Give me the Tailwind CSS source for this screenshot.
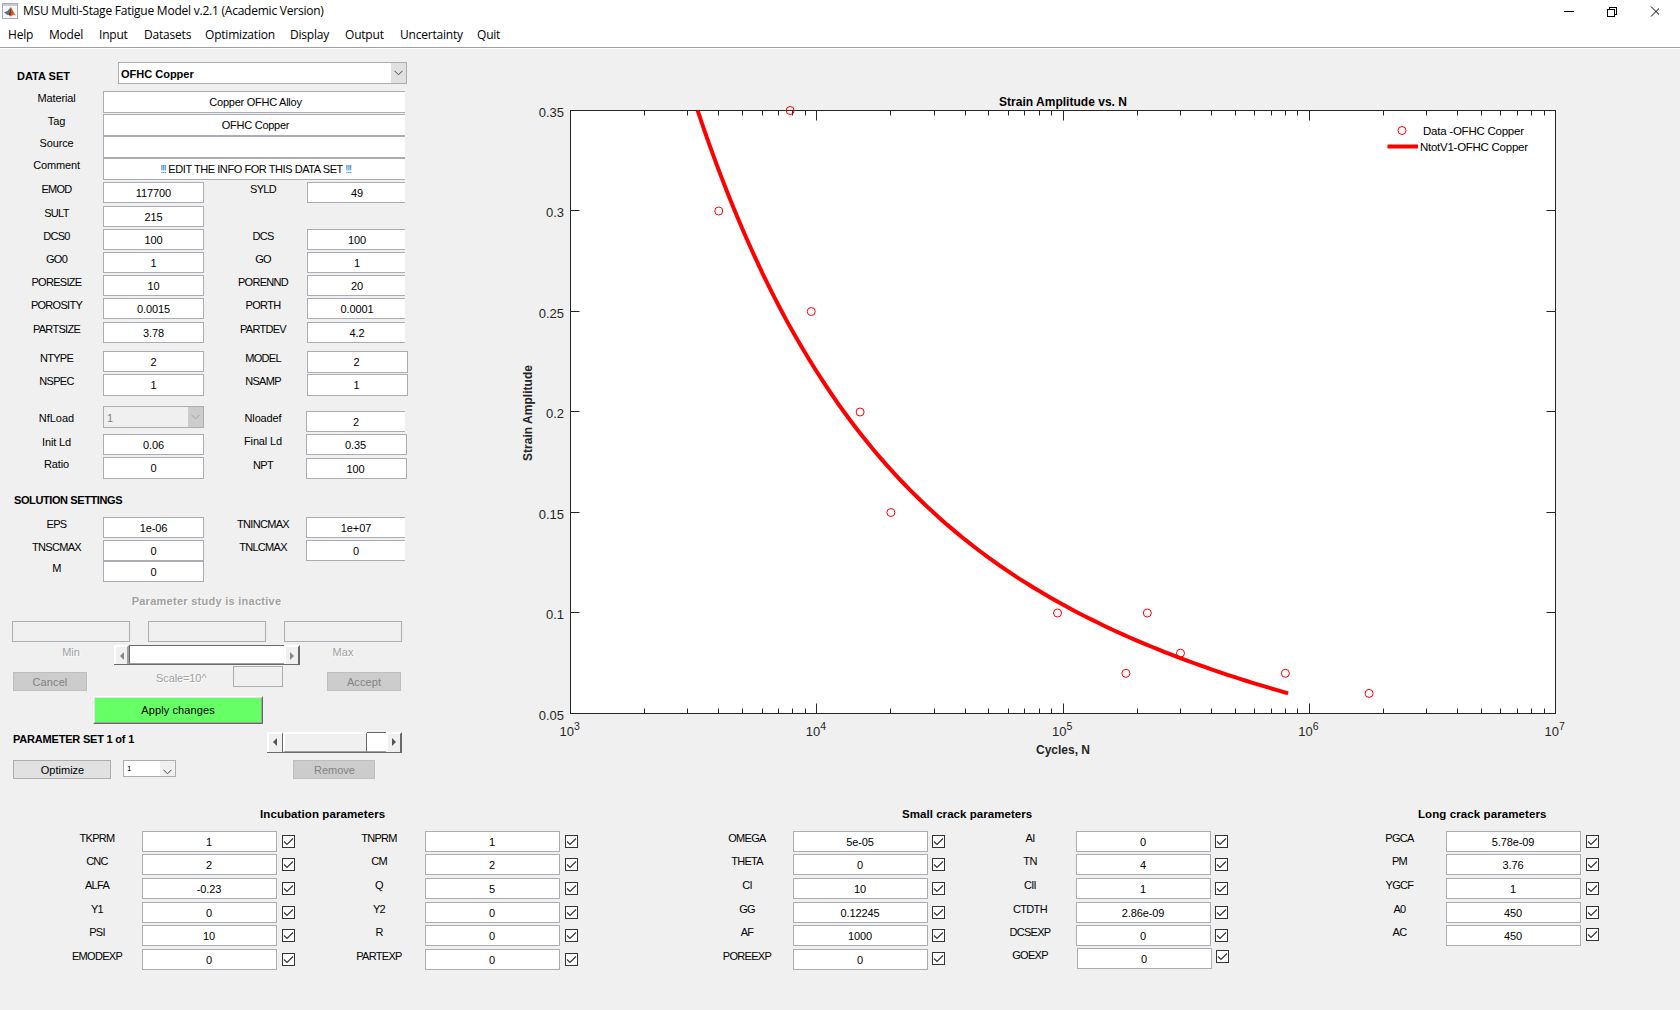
<!DOCTYPE html>
<html lang="en">
<head>
    <meta charset="UTF-8">
    <meta name="viewport" content="width=device-width, initial-scale=1.0">
    <title>MSU Multi-Stage Fatigue Model v.2.1 (Academic Version)</title>
    <script src="https://cdn.jsdelivr.net/npm/@tailwindcss/browser@4"></script>
</head>
<body class="w-[1680px] h-[1010px] overflow-hidden bg-[#f0f0f0] text-black text-[11px] font-['Liberation_Sans',Arial,sans-serif]">

    <!-- Title bar and menu -->
    <header class="h-[49px] bg-white border-b border-white font-['Open_Sans','Noto_Sans',sans-serif] text-[12px]">
        <div class="h-[48px] border-b border-[#a0a0a0]">
            <div class="flex h-[22px] items-center pl-[2px]">
                <svg width="16" height="16" viewBox="0 0 16 16" class="shrink-0">
                    <rect x="0.5" y="0.5" width="15" height="15" fill="#f4f6f8" stroke="#a3adb8"/>
                    <rect x="1" y="1" width="14" height="2" fill="#c3ccd6"/>
                    <path d="M2 9.5 L5.5 8 L8.5 4.5 L7.5 11 L5.5 12 Z" fill="#3f74a8"/>
                    <path d="M8.8 4 C10 5 11.5 10 14 12.5 L11.5 11.5 L8.5 13.5 L6.2 11.3 C7.8 10 8 6 8.8 4 Z" fill="#d8581c"/>
                    <path d="M8.8 4 C8.6 7 8 10.5 6.2 11.3 L8 12.5 C9.2 9 9.3 6.5 8.8 4 Z" fill="#7e1f10"/>
                </svg>
                <span class="ml-[5px] w-[1536px] whitespace-nowrap tracking-[-0.23px]">MSU Multi-Stage Fatigue Model v.2.1 (Academic Version)</span>
                <svg width="100" height="12" viewBox="0 0 100 12" fill="none" stroke="#000" class="shrink-0">
                    <path d="M5 6.5h10"/>
                    <path d="M48.500 4.500h7v7h-7z M50.500 4.500v-2h7v7h-2" shape-rendering="crispEdges"/>
                    <path d="M92 1.500l10 10M102 1.500l-10 10"/>
                </svg>
            </div>
            <nav class="grid h-[25px] grid-cols-[41px_50px_45px_61px_85px_55px_55px_77px_40px] items-center pl-[8px] whitespace-nowrap tracking-[-0.2px]">
                <span>Help</span><span>Model</span><span>Input</span><span>Datasets</span><span>Optimization</span><span>Display</span><span>Output</span><span>Uncertainty</span><span>Quit</span>
            </nav>
        </div>
    </header>

    <main class="flex h-[751px]">
        <!-- Left panel -->
        <aside class="w-[420px] shrink-0">
            <div class="flex h-[42px] pt-[13px]">
                <h2 class="w-[101px] ml-[17px] mt-[7px] leading-[14px] font-bold">DATA SET</h2>
                <div class="flex h-[22px] w-[289px] justify-between border border-[#abadb3] bg-white">
                    <span class="pl-[2px] leading-[22px] font-bold">OFHC Copper</span>
                    <span class="flex w-[15px] items-center justify-center bg-[#e1e1e1]">
                        <svg width="9" height="6" viewBox="0 0 9 6" fill="none" stroke="#444"><path d="M0.500 0.800l4 4l4-4"/></svg>
                    </span>
                </div>
            </div>
            <div id="info"></div>
            <div class="flex h-[308px]">
                <div id="material-left" class="w-[204px]"></div>
                <div id="material-right" class="w-[204px]"></div>
            </div>
            <h2 class="ml-[14px] mt-[3px] h-[24px] leading-[14px] font-bold tracking-[-0.4px]">SOLUTION SETTINGS</h2>
            <div class="flex h-[65px]">
                <div id="solution-left" class="w-[204px]"></div>
                <div id="solution-right" class="w-[204px]"></div>
            </div>

            <!-- Parameter study -->
            <p class="mt-[12px] w-[413px] text-center leading-[14px] font-bold tracking-[0.27px] text-[#a0a0a0] [text-shadow:1px_1px_0_#fff]">Parameter study is inactive</p>
            <div class="mt-[13px] ml-[12px] flex gap-[18px]">
                <div class="h-[21px] w-[118px] border border-[#abadb3]"></div>
                <div class="h-[21px] w-[118px] border border-[#abadb3]"></div>
                <div class="h-[21px] w-[118px] border border-[#abadb3]"></div>
            </div>
            <div class="flex h-[24px] text-[#a0a0a0] [text-shadow:1px_1px_0_#fff]">
                <span class="w-[114px] pl-[28px] text-center leading-[20px]">Min</span>
                <div class="mt-[3px] flex h-[20px] w-[186px] border-b border-[#696969]">
                    <span class="flex w-[15px] items-center justify-center border-t-2 border-l-2 border-r-2 border-t-white border-l-white border-r-[#a0a0a0]">
                        <svg width="4" height="8" viewBox="0 0 4 8"><path d="M4 0v8l-4-4z" fill="#888"/></svg>
                    </span>
                    <span class="w-[155px] border border-r-0 border-[#696969] border-b-[#a0a0a0] bg-white"></span>
                    <span class="flex w-[16px] items-center justify-center border-t-2 border-l-2 border-r-2 border-t-white border-l-white border-r-[#696969]">
                        <svg width="4" height="8" viewBox="0 0 4 8"><path d="M0 0v8l4-4z" fill="#888"/></svg>
                    </span>
                </div>
                <span class="w-[86px] text-center leading-[20px]">Max</span>
            </div>
            <div class="flex h-[25px]">
                <button class="ml-[13px] mt-[6px] h-[19px] w-[74px] border border-[#bfbfbf] bg-[#ccc] tracking-[0.1px] text-[#838383]"><span class="relative top-[1px]">Cancel</span></button>
                <span class="ml-[69px] w-[77px] leading-[24px] tracking-[-0.1px] text-[#a0a0a0] [text-shadow:1px_1px_0_#fff]">Scale=10^</span>
                <div class="h-[21px] w-[50px] border border-[#abadb3]"></div>
                <button class="ml-[44px] mt-[6px] h-[19px] w-[74px] border border-[#bfbfbf] bg-[#ccc] tracking-[0.1px] text-[#838383]"><span class="relative top-[1px]">Accept</span></button>
            </div>
            <div class="mt-[5px] ml-[93px] h-[28px] w-[170px] border-t border-l border-r border-b border-t-white border-l-white border-r-[#696969] border-b-[#696969]">
                <button class="block h-full w-full border border-t-[#e3e3e3] border-l-[#e3e3e3] border-r-[#a0a0a0] border-b-[#a0a0a0] bg-[#66ff66] tracking-[0.1px]">Apply changes</button>
            </div>
            <div class="mt-[8px] flex h-[21px]">
                <h2 class="ml-[13px] w-[254px] leading-[14px] font-bold tracking-[-0.2px]">PARAMETER SET 1 of 1</h2>
                <div class="flex h-[21px] w-[135px] border-b border-[#696969]">
                    <span class="flex w-[16px] items-center justify-center border-t-2 border-l-2 border-r border-t-white border-l-white border-r-[#696969] pr-px pb-[2px]">
                        <svg width="4" height="8" viewBox="0 0 4 8"><path d="M4 0v8l-4-4z" fill="#555"/></svg>
                    </span>
                    <span class="w-[84px] border-t-2 border-l-2 border-r border-b border-t-white border-l-white border-r-[#696969] border-b-[#a0a0a0]"></span>
                    <span class="w-[19px] border-t border-b border-t-[#696969] border-b-[#a0a0a0] bg-white"></span>
                    <span class="flex w-[16px] items-center justify-center border-t-2 border-l-2 border-r-2 border-t-white border-l-white border-r-[#696969] pb-[2px]">
                        <svg width="4" height="8" viewBox="0 0 4 8"><path d="M0 0v8l4-4z" fill="#555"/></svg>
                    </span>
                </div>
            </div>
            <div class="mt-[7px] ml-[13px] flex h-[19px]">
                <button class="h-[19px] w-[98px] border border-[#adadad] bg-[#e1e1e1] pl-px"><span class="relative top-[1px]">Optimize</span></button>
                <div class="ml-[12px] flex h-[17px] w-[53px] border border-[#abadb3] bg-white">
                    <span class="w-[36px] pl-[3px] text-[8px] leading-[15px]">1</span>
                    <span class="flex w-[15px] items-end justify-center bg-[#f0f0f0] pb-[1px]">
                        <svg width="9" height="6" viewBox="0 0 9 6" fill="none" stroke="#444"><path d="M0.500 0.800l4 4l4-4"/></svg>
                    </span>
                </div>
                <button class="ml-[117px] h-[19px] w-[82px] border border-[#bfbfbf] bg-[#ccc] pl-px text-[#838383]"><span class="relative top-[1px]">Remove</span></button>
            </div>
        </aside>

        <!-- Strain-life plot, drawn in window coordinates -->
        <svg id="plot" width="1260" height="751" viewBox="420 49 1260 751" class="shrink-0 font-['Liberation_Sans',Arial,sans-serif]"></svg>
    </main>

    <!-- Model parameters -->
    <footer class="flex">
        <section class="ml-[52px] w-[526px]">
            <h2 class="h-[31px] pl-[208px] leading-[28px] text-[11.5px] font-bold tracking-[0.09px]">Incubation parameters</h2>
            <div class="flex gap-[40px]">
                <div id="inc-1" class="w-[243px]"></div>
                <div id="inc-2" class="w-[243px]"></div>
            </div>
        </section>
        <section class="ml-[125px] w-[526px]">
            <h2 class="h-[31px] pl-[199px] leading-[28px] text-[11.5px] font-bold tracking-[0.05px]">Small crack parameters</h2>
            <div class="flex gap-[41px]">
                <div id="small-1" class="w-[242px]"></div>
                <div id="small-2" class="w-[242px]"></div>
            </div>
        </section>
        <section class="ml-[127px] w-[243px]">
            <h2 class="h-[31px] pl-[62px] leading-[28px] text-[11.5px] font-bold tracking-[0.09px]">Long crack parameters</h2>
            <div id="long-1"></div>
        </section>
    </footer>

    <script>
        const H21 = "h-[21px] leading-[20px]";
        const H22 = "h-[22px] leading-[20px]";
        const CLIP = "w-[98px] border-r-0 pl-px ml-[103px]";
        const CLIP_L = "w-[99px] border-r-0 ml-[102px]";
        const FULL = "w-[101px] ml-[103px]";
        const FULL_R = "w-[101px] ml-[103px] pr-[2px]";
        const FULL_L = "w-[101px] ml-[102px] pr-[2px]";

        function fill(id, html) {
            document.getElementById(id).innerHTML = html;
        }

        // capitals are set tighter than mixed case
        function tracking(text) {
            return /[a-z]/.test(text) ? "tracking-[-0.15px]" : "tracking-[-0.7px]";
        }

        // rows: [label, value, margin, field classes, label offset]
        function fields(rows, labelPad) {
            return rows.map(([label, value, margin, box, offset]) => `
                <div class="relative ${margin}">
                    <span class="absolute top-0 left-0 w-[103px] text-center leading-[14px] ${labelPad} ${tracking(label)} ${offset || ""}">${label}</span>
                    <div class="border border-[#abadb3] bg-white text-center tracking-[-0.1px] ${box}">${value}</div>
                </div>`).join("");
        }

        fill("info", [
            ["Material", "Copper OFHC Alloy", ""],
            ["Tag", "OFHC Copper", "mt-[1px]"],
            ["Source", "", ""],
            ["Comment", "<span class='text-[#1e7fd0] tracking-[-1.2px]'>!!!</span> EDIT THE INFO FOR THIS DATA SET <span class='text-[#1e7fd0] tracking-[-1.2px]'>!!!</span>", ""],
        ].map(([label, value, margin]) => `
            <div class="flex ${margin}">
                <span class="w-[103px] pl-[10px] text-center leading-[15px] tracking-[-0.15px]">${label}</span>
                <div class="h-[22px] w-[302px] border border-r-0 border-[#abadb3] bg-white pl-[2px] text-center leading-[20px] whitespace-pre ${label === "Comment" ? "tracking-[-0.43px]" : "tracking-[-0.25px]"}">${value}</div>
            </div>`).join("") + `<div class="h-[2px]"></div>`);

        fill("material-left", fields([
            ["EMOD", "117700", "", `${H21} ${FULL}`],
            ["SULT", "215", "mt-[3px]", `${H21} ${FULL}`],
            ["DCS0", "100", "mt-[2px]", `${H21} ${FULL}`],
            ["GO0", "1", "mt-[2px]", `${H21} ${FULL}`],
            ["PORESIZE", "10", "mt-[2px]", `${H21} ${FULL}`],
            ["POROSITY", "0.0015", "mt-[2px]", `${H21} ${FULL}`],
            ["PARTSIZE", "3.78", "mt-[3px]", `${H21} ${FULL}`],
            ["NTYPE", "2", "mt-[8px]", `${H21} ${FULL}`],
            ["NSPEC", "1", "mt-[2px]", `${H22} ${FULL}`],
        ], "pl-[10px]") + `
            <div class="mt-[10px] flex h-[22px]">
                <span class="w-[103px] pl-[10px] text-center leading-[24px]">NfLoad</span>
                <div class="flex h-[22px] w-[101px] border border-[#abadb3] text-[#838383]">
                    <span class="w-[84px] pl-[3px] leading-[22px]">1</span>
                    <span class="flex w-[15px] items-center justify-center bg-[#ccc]">
                        <svg width="9" height="6" viewBox="0 0 9 6" fill="none" stroke="#a0a0a0"><path d="M0.500 0.800l4 4l4-4"/></svg>
                    </span>
                </div>
            </div>` + fields([
            ["Init Ld", "0.06", "mt-[6px]", `${H21} ${FULL}`, "top-[1px]"],
            ["Ratio", "0", "mt-[2px]", `${H22} ${FULL}`],
        ], "pl-[10px]"));

        fill("material-right", fields([
            ["SYLD", "49", "", `${H21} ${CLIP}`],
            ["DCS", "100", "mt-[26px]", `${H21} ${CLIP}`],
            ["GO", "1", "mt-[2px]", `${H21} ${CLIP}`],
            ["PORENND", "20", "mt-[2px]", `${H21} ${CLIP}`],
            ["PORTH", "0.0001", "mt-[2px]", `${H21} ${CLIP}`],
            ["PARTDEV", "4.2", "mt-[3px]", `${H21} ${CLIP}`],
            ["MODEL", "2", "mt-[8px]", `${H22} ${FULL_R}`],
            ["NSAMP", "1", "mt-[1px]", `${H22} ${FULL_R}`],
            ["Nloadef", "2", "mt-[15px]", `${H21} ${CLIP_L}`],
            ["Final Ld", "0.35", "mt-[2px]", `${H21} ${FULL_L}`],
            ["NPT", "100", "mt-[3px]", `${H21} ${FULL_L}`],
        ], "pl-[15px]"));

        fill("solution-left", fields([
            ["EPS", "1e-06", "", `${H21} ${FULL}`],
            ["TNSCMAX", "0", "mt-[2px]", `${H21} ${FULL}`],
            ["M", "0", "", `${H21} ${FULL}`],
        ], "pl-[10px]"));

        fill("solution-right", fields([
            ["TNINCMAX", "1e+07", "", `${H21} ${CLIP_L}`],
            ["TNLCMAX", "0", "mt-[2px]", `${H21} ${CLIP_L}`],
        ], "pl-[15px]"));

        // rows: [label, value, margin, row shift, checkbox shift]
        function params(rows, gap, labelPad) {
            return rows.map(([label, value, margin, shift, checkShift]) => `
                <div class="flex h-[21px] ${margin}">
                    <span class="w-[90px] shrink-0 text-center leading-[14px] ${labelPad} ${tracking(label)}">${label}</span>
                    <div class="h-[21px] w-[135px] shrink-0 border border-[#abadb3] bg-white pr-px text-center leading-[21px] tracking-[-0.1px] ${shift || ""}">${value}</div>
                    <svg width="13" height="13" viewBox="0 0 13 13" class="shrink-0 mt-[4px] ${gap} ${checkShift || ""}">
                        <rect x="0.5" y="0.5" width="12" height="12" fill="#fff" stroke="#333"/>
                        <path d="M2 6.500l3 3l6-6" fill="none" stroke="#333" stroke-width="1.2"/>
                    </svg>
                </div>`).join("");
        }

        fill("inc-1", params([
            ["TKPRM", "1", ""],
            ["CNC", "2", "mt-[2px]"],
            ["ALFA", "-0.23", "mt-[3px]"],
            ["Y1", "0", "mt-[3px]"],
            ["PSI", "10", "mt-[2px]"],
            ["EMODEXP", "0", "mt-[3px]"],
        ], "ml-[5px]", "pr-0"));
        fill("inc-2", params([
            ["TNPRM", "1", ""],
            ["CM", "2", "mt-[2px]"],
            ["Q", "5", "mt-[3px]"],
            ["Y2", "0", "mt-[3px]"],
            ["R", "0", "mt-[2px]"],
            ["PARTEXP", "0", "mt-[3px]"],
        ], "ml-[5px]", "pr-[2px]"));
        fill("small-1", params([
            ["OMEGA", "5e-05", ""],
            ["THETA", "0", "mt-[2px]"],
            ["CI", "10", "mt-[3px]"],
            ["GG", "0.12245", "mt-[3px]"],
            ["AF", "1000", "mt-[2px]"],
            ["POREEXP", "0", "mt-[3px]", "", "relative -top-px"],
        ], "ml-[4px]", "pr-[2px]"));
        fill("small-2", params([
            ["AI", "0", ""],
            ["TN", "4", "mt-[2px]"],
            ["CII", "1", "mt-[3px]"],
            ["CTDTH", "2.86e-09", "mt-[3px]"],
            ["DCSEXP", "0", "mt-[2px]"],
            ["GOEXP", "0", "mt-[2px]", "ml-px", "relative -top-[2px]"],
        ], "ml-[4px]", "pr-[2px]"));
        fill("long-1", params([
            ["PGCA", "5.78e-09", ""],
            ["PM", "3.76", "mt-[2px]"],
            ["YGCF", "1", "mt-[3px]"],
            ["A0", "450", "mt-[3px]"],
            ["AC", "450", "mt-[2px]", "", "relative -top-px"],
        ], "ml-[5px]", "pr-[3px]"));

        // Plot scales: log10 cycles on x, strain amplitude on y
        const L = 570.5, R = 1555.5, T = 110.5, B = 713.5;
        const px = logN => L + (logN - 3) * (R - L) / 4;
        const py = strain => B - (strain - 0.05) * (B - T) / 0.3;
        const snap = v => Math.floor(v) + 0.5;

        let svg = `<rect x="${L}" y="${T}" width="${R - L}" height="${B - T}" fill="#fff" stroke="#262626"/>`;

        let ticks = "";
        for (let d = 3; d < 7; d++) {
            for (let k = 1; k < 10; k++) {
                if (d === 3 && k === 1) continue;
                const x = snap(px(d + Math.log10(k)));
                const len = k === 1 ? 10 : 5;
                ticks += `M${x} ${T}v${len}M${x} ${B}v${-len}`;
            }
        }
        for (let i = 1; i < 6; i++) {
            const y = snap(py(0.05 + i * 0.05) - 0.1);
            ticks += `M${L} ${y}h9M${R} ${y}h-9`;
        }
        svg += `<path d="${ticks}" stroke="#262626" fill="none"/>`;

        [0.05, 0.1, 0.15, 0.2, 0.25, 0.3, 0.35].forEach(v => {
            svg += `<text x="564" y="${py(v) + 6}" text-anchor="end" font-size="13" fill="#262626">${v}</text>`;
        });
        for (let d = 3; d <= 7; d++) {
            svg += `<text x="${px(d) - 11}" y="736" font-size="13" fill="#262626">10</text>
                    <text x="${px(d) + 3.5}" y="730" font-size="10.500" fill="#262626">${d}</text>`;
        }

        const data = [[7800, 0.35], [4000, 0.3], [9500, 0.25], [15000, 0.2], [20000, 0.15], [95000, 0.1],
            [220000, 0.1], [300000, 0.08], [180000, 0.07], [800000, 0.07], [1750000, 0.06]];
        data.forEach(([n, e]) => {
            svg += `<circle cx="${px(Math.log10(n))}" cy="${py(e)}" r="4" fill="none" stroke="#f00"/>`;
        });

        // Model curve, cubic in log-log space
        const curve = [];
        for (let i = 0; i <= 100; i++) {
            const l = 3.516 + i * (5.914 - 3.516) / 100;
            const a = l - 3.516, b = l - 4, c = l - 5;
            const e = Math.pow(10, -0.4559 - 0.4165 * a + 0.06174 * a * b - 0.01202 * a * b * c);
            curve.push(`${px(l).toFixed(1)},${py(e).toFixed(1)}`);
        }
        svg += `<polyline points="${curve.join(" ")}" fill="none" stroke="#f00" stroke-width="4"/>`;

        svg += `
            <text x="999" y="106" font-size="12" font-weight="bold" textLength="128">Strain Amplitude vs. N</text>
            <text x="1036" y="754" font-size="12" font-weight="bold" fill="#262626" textLength="54">Cycles, N</text>
            <text transform="translate(532 461) rotate(-90)" font-size="12" font-weight="bold" fill="#262626" textLength="96">Strain Amplitude</text>
            <circle cx="1402" cy="130.500" r="4" fill="none" stroke="#f00"/>
            <text x="1423" y="135" font-size="11.500" textLength="101">Data -OFHC Copper</text>
            <path d="M1387.500 146.500h30.500" stroke="#f00" stroke-width="4"/>
            <text x="1420" y="151" font-size="11.500" textLength="108">NtotV1-OFHC Copper</text>`;
        fill("plot", svg);
    </script>
</body>
</html>
